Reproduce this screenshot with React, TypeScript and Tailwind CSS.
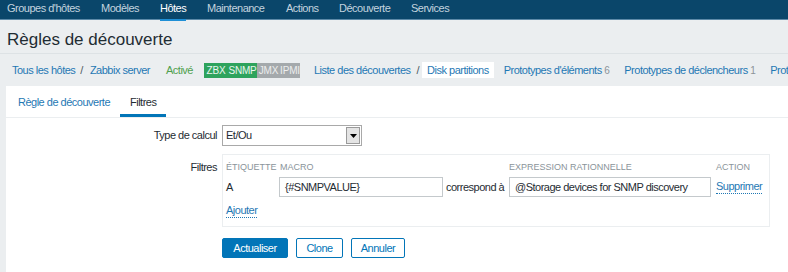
import React from "react";

const navItems = [
  { label: "Groupes d'hôtes", w: "w-[94px]" },
  { label: "Modèles", w: "w-[59px]" },
  { label: "Hôtes", w: "w-[47px]" },
  { label: "Maintenance", w: "w-[79px]" },
  { label: "Actions", w: "w-[53px]" },
  { label: "Découverte", w: "w-[72px]" },
  { label: "Services", w: "w-[60px]" },
];

function Badge({ label, on, w }: { label: string; on: boolean; w: string }) {
  return (
    <span
      className={
        w +
        " text-center leading-[15px] text-[10px] tracking-[-0.2px] " +
        (on ? "bg-[#2ea35d] text-white/90" : "bg-[#a4a9ac] text-white/80")
      }
    >
      {label}
    </span>
  );
}

export default function App() {
  return (
    <div
      className="w-[788px] h-[272px] overflow-hidden bg-[#ebeef0] text-[11px] tracking-[-0.5px] text-[#1f2c33] whitespace-nowrap"
      style={{ fontFamily: '"Liberation Sans", Arial, sans-serif' }}
    >
      {/* top menu */}
      <div className="h-[19px] bg-[#0a466a] border-b border-[#5d8aa8] flex items-start pl-[7px] box-content">
        {navItems.map((item) => (
          <div key={item.label} className={item.w + " h-[19px]"}>
            <span
              className={
                "relative inline-block h-[19px] leading-[13px] " +
                (item.label === "Hôtes" ? "text-white" : "text-[#c3d3df]")
              }
            >
              {item.label}
              {item.label === "Hôtes" && <span className="absolute left-0 right-0 bottom-0 h-[2px] bg-[#1f8fd6]" />}
            </span>
          </div>
        ))}
      </div>

      {/* title */}
      <div className="h-[34px] border-b border-[#dde2e5] pl-[7px] pt-[10px]">
        <h1 className="text-[17px] tracking-[0px] leading-[20px] text-[#1f2c33]">Règles de découverte</h1>
      </div>

      {/* breadcrumbs */}
      <div className="flex items-center h-[32px] pl-[12px] text-[#1f78b4]">
        <span>Tous les hôtes</span>
        <span className="ml-[5px] mr-[7px] text-[#4d5a62]">/</span>
        <span>Zabbix server</span>
        <span className="ml-[16px] text-[#4fa04f]">Activé</span>
        <span className="ml-[11px] flex">
          <Badge label="ZBX" on w="w-[24px]" />
          <Badge label="SNMP" on w="w-[29px]" />
          <Badge label="JMX" on={false} w="w-[23px]" />
          <Badge label="IPMI" on={false} w="w-[20px]" />
        </span>
        <span className="ml-[14px]">Liste des découvertes</span>
        <span className="ml-[6px] mr-[3px] text-[#4d5a62]">/</span>
        <span className="bg-white px-[5px] leading-[16px]">Disk partitions</span>
        <span className="ml-[10px]">
          Prototypes d'éléments <span className="text-[#8b9399] text-[10px]">6</span>
        </span>
        <span className="ml-[15px]">
          Prototypes de déclencheurs <span className="text-[#8b9399] text-[10px]">1</span>
        </span>
        <span className="ml-[15px]">Prototypes de graphiques</span>
      </div>

      {/* panel */}
      <div className="ml-[6px] bg-white h-[200px]">
        <div className="flex h-[32px] border-b border-[#ebeef0] pl-[2px]">
          <div className="px-[10px] pt-[8px] text-[#1f78b4]">Règle de découverte</div>
          <div className="px-[10px] pt-[8px] text-[#1f2c33] border-b-[3px] border-[#0275b8]">Filtres</div>
        </div>

        <div className="pt-[7px]">
          <div className="flex items-center">
            <div className="w-[216px] pr-[5px] text-right">Type de calcul</div>
            <div className="flex w-[140px] h-[21px] border border-[#a9a9a9] bg-white">
              <div className="flex-1 pl-[3px] leading-[19px] text-[#1f2c33]">Et/Ou</div>
              <div className="w-[16px] h-[19px] p-[1px] bg-white">
                <div className="w-full h-full bg-[#e4e4e4] border border-[#9a9a9a] flex items-center justify-center">
                  <svg width="7" height="4" viewBox="0 0 7 4">
                    <path d="M0 0h7L3.5 4z" fill="#000" />
                  </svg>
                </div>
              </div>
            </div>
          </div>

          <div className="flex mt-[8px]">
            <div className="w-[216px] pr-[5px] text-right pt-[5px]">Filtres</div>
            <div className="w-[548px] h-[73px] border border-[#ebeef0] pl-[3px] pt-[5px]">
              <div className="flex text-[9px] tracking-[0px] text-[#8a949a] leading-[14px]">
                <div className="w-[54px]">ÉTIQUETTE</div>
                <div className="w-[229px]">MACRO</div>
                <div className="w-[207px]">EXPRESSION RATIONNELLE</div>
                <div>ACTION</div>
              </div>
              <div className="flex items-center mt-[3px]">
                <div className="w-[53px]">A</div>
                <div className="w-[164px] h-[20px] border border-[#c4c9cc] pl-[5px] leading-[18px]">{"{#SNMPVALUE}"}</div>
                <div className="w-[66px] pl-[3px]">correspond à</div>
                <div className="w-[202px] h-[20px] border border-[#c4c9cc] pl-[5px] leading-[18px]">@Storage devices for SNMP discovery</div>
                <div className="ml-[5px] text-[#1f78b4] border-b border-dotted border-[#1f78b4] leading-[13px]">Supprimer</div>
              </div>
              <div className="mt-[7px] inline-block text-[#1f78b4] border-b border-dotted border-[#1f78b4] leading-[13px]">Ajouter</div>
            </div>
          </div>

          <div className="flex ml-[216px] mt-[11px] gap-[8px]">
            <button className="w-[66px] h-[20px] bg-[#0275b8] border border-[#0275b8] text-white rounded-[2px] leading-[18px]">Actualiser</button>
            <button className="w-[47px] h-[20px] bg-white border border-[#0275b8] text-[#0275b8] rounded-[2px] leading-[18px]">Clone</button>
            <button className="w-[54px] h-[20px] bg-white border border-[#0275b8] text-[#0275b8] rounded-[2px] leading-[18px]">Annuler</button>
          </div>
        </div>
      </div>
    </div>
  );
}
